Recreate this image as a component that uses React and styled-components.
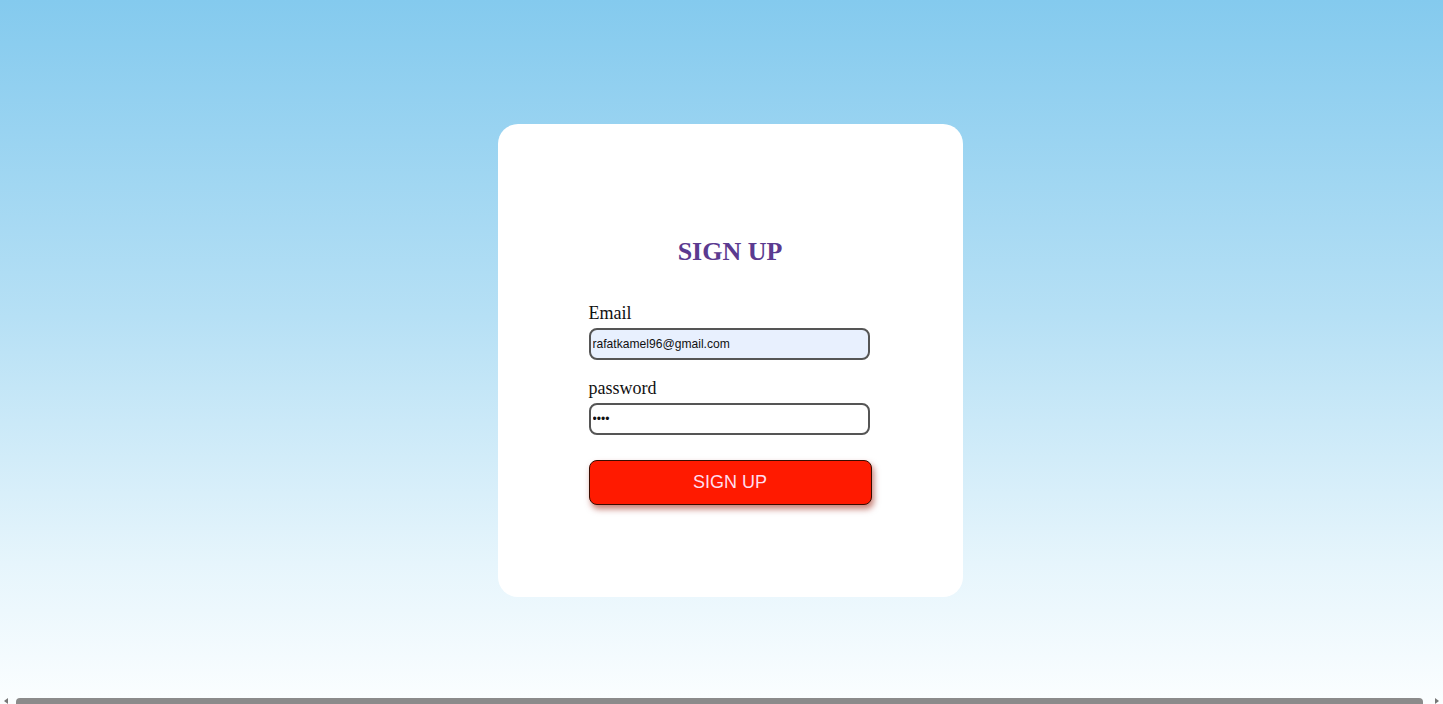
import React from 'react';
import styled, { createGlobalStyle } from 'styled-components';

const GlobalStyle = createGlobalStyle`
  html, body {
    margin: 0;
    padding: 0;
    height: 100%;
    overflow: hidden;
  }
  body {
    font-family: "Liberation Serif", "Times New Roman", serif;
    background: linear-gradient(180deg, #84caee 0%, #b6e0f5 45%, #e6f5fc 80%, #fbfeff 100%);
  }
`;

const Page = styled.div`
  height: 100vh;
  display: flex;
  flex-direction: column;
`;

const Main = styled.main`
  flex: 1;
  display: flex;
  justify-content: center;
  padding: 124px 0 0 17px;
  box-sizing: border-box;
`;

const Card = styled.div`
  width: 465px;
  height: 473px;
  box-sizing: border-box;
  background: #fff;
  border-radius: 20px;
  padding-top: 113px;
  display: flex;
  flex-direction: column;
  align-items: center;
`;

const Title = styled.h2`
  margin: 0;
  font-size: 26px;
  line-height: 30px;
  font-weight: bold;
  color: #5b3a90;
`;

const Form = styled.form`
  width: 283px;
  margin-top: 36px;
  display: flex;
  flex-direction: column;
`;

const Label = styled.label`
  font-size: 18px;
  line-height: 20px;
  color: #111;
  margin-bottom: 5px;
`;

const Input = styled.input`
  width: 281px;
  height: 32px;
  box-sizing: border-box;
  border: 2px solid #555;
  border-radius: 8px;
  padding: 0 2px;
  font-family: "Liberation Sans", Arial, sans-serif;
  font-size: 12.1px;
  color: #111;
  background: ${p => (p.$filled ? '#e8f0fe' : '#fff')};
  outline: none;
  margin-bottom: ${p => p.$gap}px;
`;

const Button = styled.button`
  width: 283px;
  height: 45px;
  border: 1px solid #3a0c00;
  border-radius: 8px;
  background: #ff1a00;
  color: #fde;
  font-family: "Liberation Sans", Arial, sans-serif;
  font-size: 18px;
  cursor: pointer;
  box-shadow: 2px 4px 6px rgba(150, 20, 0, 0.55);
`;

const ScrollTrack = styled.div`
  height: 6px;
  display: flex;
  align-items: stretch;
  justify-content: space-between;
  padding: 0 4px;
  gap: 8px;
`;

const Arrow = styled.span`
  width: 0;
  height: 0;
  align-self: center;
  border-top: 3px solid transparent;
  border-bottom: 3px solid transparent;
  ${p => (p.$dir === 'left' ? 'border-right: 4px solid #777;' : 'border-left: 4px solid #777;')}
`;

const Thumb = styled.div`
  flex: 1;
  margin-right: 4px;
  background: #8b8b8b;
  border-radius: 4px 4px 0 0;
`;

export default function App() {
  return (
    <Page>
      <GlobalStyle />
      <Main>
        <Card>
          <Title>SIGN UP</Title>
          <Form onSubmit={e => e.preventDefault()}>
            <Label htmlFor="email">Email</Label>
            <Input id="email" type="email" defaultValue="rafatkamel96@gmail.com" $filled $gap={18} />
            <Label htmlFor="password">password</Label>
            <Input id="password" type="password" defaultValue="1234" $gap={25} />
            <Button type="submit">SIGN UP</Button>
          </Form>
        </Card>
      </Main>
      <ScrollTrack>
        <Arrow $dir="left" />
        <Thumb />
        <Arrow $dir="right" />
      </ScrollTrack>
    </Page>
  );
}
